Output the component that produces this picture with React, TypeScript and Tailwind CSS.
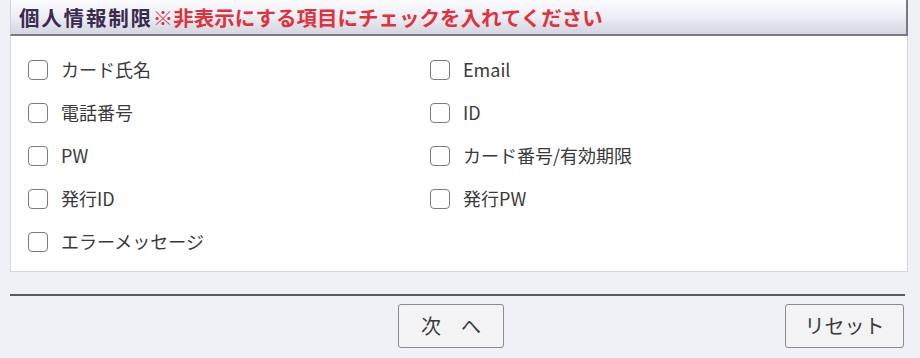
const left = ['カード氏名', '電話番号', 'PW', '発行ID', 'エラーメッセージ'];
const right = ['Email', 'ID', 'カード番号/有効期限', '発行PW'];

const font = { fontFamily: '"MS UI Gothic", "Noto Sans CJK JP", sans-serif' };

const CheckItem = ({ label }: { label: string }) => (
  <label className="flex items-center h-[43px] gap-[13px] text-[18px] text-[#3a3a3a]">
    <span className="w-[20px] h-[20px] rounded-[4px] border-[1.5px] border-[#7c7c7c] bg-white shrink-0" />
    <span>{label}</span>
  </label>
);

export default function App() {
  return (
    <div
      className="w-[920px] h-[358px] bg-[#f0f1f6] pl-[10px] pr-[12px] overflow-hidden"
      style={font}
    >
      {/* Header */}
      <div className="h-[36px] flex items-center pl-[8px] bg-gradient-to-b from-[#fcfcfe] via-[#eceef5] to-[#d3d5e0] border-b-2 border-r-2 border-[#7a7a82] border-l border-l-[#cfd0d8]">
        <span className="text-[20.5px] font-bold text-[#3b2a4e] tracking-[1.8px]">個人情報制限</span>
        <span className="text-[20.5px] font-bold text-[#e3313b]">※非表示にする項目にチェックを入れてください</span>
      </div>

      {/* Body */}
      <div className="bg-white border border-t-0 border-[#d6d7dd] pt-[12px] pb-[8px] pl-[17px] grid grid-cols-[402px_1fr]">
        <div className="flex flex-col">
          {left.map((l) => (
            <CheckItem key={l} label={l} />
          ))}
        </div>
        <div className="flex flex-col">
          {right.map((l) => (
            <CheckItem key={l} label={l} />
          ))}
        </div>
      </div>

      <div className="mt-[22px] h-[2px] bg-[#5a5a5e] mr-[3px]" />

      {/* Buttons */}
      <div className="flex items-center mt-[8px]">
        <button className="ml-[388px] w-[106px] h-[44px] rounded-[3px] border-[1.5px] border-[#8a8a8e] bg-[#f3f3f5] text-[20px] text-[#3a3a3a]">
          次　へ
        </button>
        <button className="ml-auto mr-[4px] w-[119px] h-[44px] rounded-[3px] border-[1.5px] border-[#8a8a8e] bg-[#f3f3f5] text-[20px] text-[#3a3a3a]">
          リセット
        </button>
      </div>
    </div>
  );
}
